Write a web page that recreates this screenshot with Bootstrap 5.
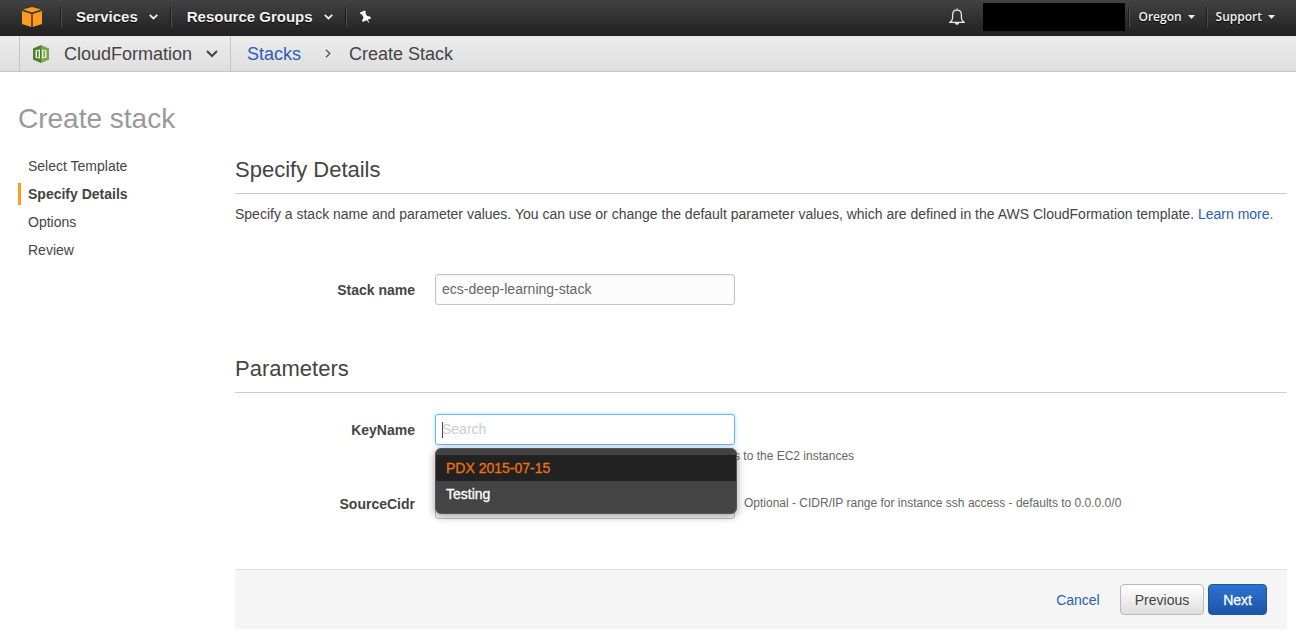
<!DOCTYPE html>
<html lang="en">
<head>
<meta charset="utf-8">
<meta name="viewport" content="width=device-width, initial-scale=1">
<title>Create Stack - CloudFormation</title>
<link href="https://cdn.jsdelivr.net/npm/bootstrap@5.3.0/dist/css/bootstrap.min.css" rel="stylesheet">
<style>
  body { font-family: "Liberation Sans", Arial, sans-serif; font-size: 14px; line-height: 20px; color: #444; background: #fff; }
  a { color: #2a5db8; text-decoration: none; }
  a:hover { text-decoration: underline; }

  .topbar { height: 36px; padding-bottom: 2px; background: linear-gradient(#424242, #202020); }
  .topbar button { color: #f2f2f2; background: none; border: 0; padding: 0; text-shadow: 0 1px 1px #000; }
  .topbar svg, .crumbs svg { display: block; flex: none; }
  .home-link { width: 60px; padding-left: 21px; }
  .rule { width: 2px; height: 20px; border-left: 1px solid #1c1c1c; background: #505050; flex: none; }
  .menu-btn { font-size: 15px; font-weight: 700; gap: 11px; height: 33px; }
  .services { margin: 0 12px 0 14px; }
  .groups { margin: 0 12px 0 15px; }
  .pin { margin-left: 11px; }
  .small-btn { font-family: "Open Sans", sans-serif; font-size: 12px; font-weight: 600; gap: 6px; }
  .region { margin: 0 11px 0 8px; }
  .support { margin: 0 21px 0 8px; }
  .account { width: 142px; height: 28px; background: #000; margin: 0 3px 0 18px; }

  .crumbs { height: 36px; border-bottom: 1px solid #c6c6c6; background: linear-gradient(#ececec, #dfdfdf); font-size: 18px; }
  .service-btn { margin-left: 19px; padding: 0 12px; width: 212px; height: 35px; border: solid #c6c6c6; border-width: 0 1px; background: none; color: #444; }
  .crumb-sep { margin: 0 18px 0 24px; }

  .wizard { padding: 0 9px 8px 18px; }
  .page-title { font-size: 28px; line-height: 32px; color: #999; margin: 31px 0 0; font-weight: 400; }
  .steps { width: 217px; padding-top: 20px; }
  .step { padding: 0 0 0 7px; border-left: 3px solid transparent; line-height: 22px; margin-bottom: 6px; }
  .step.current { border-color: #ff9a1e; font-weight: 700; }
  .section-title { font-size: 22px; line-height: 28px; font-weight: 400; margin: 0; padding-bottom: 9px; border-bottom: 1px solid #ccc; }
  .details { padding-top: 21px; }
  .intro { margin: 10px 0 50px; }

  .field-label { width: 180px; text-align: right; font-weight: 700; line-height: 32px; flex: none; margin-right: 20px; }
  .field-box { width: 300px; flex: none; }
  .field-box .form-control { height: 31px; font-size: 14px; line-height: 20px; padding: 3px 6px 5px; border: 1px solid #c4c4c4; border-radius: 3px; background: #fcfcfc; color: #666; box-shadow: inset 0 1px 2px #eee; }
  .field-box .form-control.searching { border-color: #6cb5ec; box-shadow: 0 0 5px #b5dcf8; background: linear-gradient(#444, #444) 6px center / 1px 16px no-repeat #fff; }
  .form-control::placeholder { color: #ccc; }
  .hint { font-size: 12px; line-height: 16px; color: #666; white-space: nowrap; }
  .key-field { margin-top: 21px; }
  .key-hint { margin-top: 3px; padding-left: 299px; }
  .cidr-field { margin-top: 24px; }
  .cidr-hint { margin: 7px 0 0 9px; }
  .params { margin-top: 49px; }

  .key-menu { position: absolute; top: 34px; left: 0; width: 302px; margin: 0; padding: 6px 0; list-style: none; background: #444; border: 1px solid #555; border-radius: 6px; box-shadow: 0 2px 8px rgba(0,0,0,.4); z-index: 5; }
  .key-menu button { display: block; width: 100%; height: 26px; padding: 0 10px; border: 0; text-align: left; background: none; color: #fff; -webkit-text-stroke: 0.3px; }
  .key-menu button.picked { background: #222; color: #ec7211; }

  .actions { margin-top: 49px; padding: 14px 20px; background: #f5f5f5; border-top: 1px solid #e0e0e0; }
  .actions .btn { height: 31px; padding: 0 14px; font-size: 14px; line-height: 20px; border-radius: 4px; }
  .btn-prev { color: #444; border: 1px solid #b9b9b9; background: linear-gradient(#fff, #dedede); }
  .btn-next { color: #fff; border: 1px solid #1f55a3; background: linear-gradient(#2a73d0, #1e55a6); -webkit-text-stroke: 0.3px; margin-left: 4px; }
</style>
</head>
<body>
<header class="topbar d-flex align-items-center">
  <a href="#" class="home-link" aria-label="Console home">
    <svg width="22" height="22" viewBox="0 0 22 22" fill="#ff9a1e">
      <path d="M11 1 20 3.500 11 6.500 2 3.500Z"/>
      <path d="M1 5 10.300 8V21L1 18Z"/><path d="M21 5 11.700 8V21L21 18Z"/>
    </svg>
  </a>
  <span class="rule"></span>
  <button type="button" class="menu-btn services d-flex align-items-center"><span>Services</span>
    <svg width="9" height="6" viewBox="0 0 9 6" fill="none" stroke="#eee" stroke-width="1.800"><path d="M.7.9 4.500 4.500 8.300.9"/></svg></button>
  <span class="rule"></span>
  <button type="button" class="menu-btn groups d-flex align-items-center"><span>Resource Groups</span>
    <svg width="9" height="6" viewBox="0 0 9 6" fill="none" stroke="#eee" stroke-width="1.800"><path d="M.7.9 4.500 4.500 8.300.9"/></svg></button>
  <span class="rule"></span>
  <button type="button" class="pin" aria-label="Edit shortcuts">
    <svg width="14" height="15" viewBox="0 0 14 15" fill="#fff"><path d="M2 2.600 6.800.4 7.900 1.700 7.300 2.900 9.200 6 12 6.400 13 8.500 9.900 9.500 11.500 13.600 8.600 10.300 4.500 12 4.200 9.900 5.600 7.800 4 4.600 2.500 4.300Z"/></svg></button>
  <button type="button" class="ms-auto" aria-label="Notifications">
    <svg width="16" height="18" viewBox="0 0 16 18" fill="none" stroke="#e6e6e6" stroke-width="1.300"><path d="M8 .6V2M3.600 10V7C3.600 3.600 5.300 2.200 8 2.200S12.400 3.600 12.400 7V10C12.400 12 13.300 13 15 14.300H1C2.700 13 3.600 12 3.600 10Z"/><path d="M5.700 14.800H10.300Q9.800 16.900 8 16.900T5.700 14.800Z" fill="#e6e6e6" stroke="none"/></svg></button>
  <span class="account"></span>
  <span class="rule"></span>
  <button type="button" class="small-btn region d-flex align-items-center"><span>Oregon</span>
    <svg width="7" height="4" viewBox="0 0 7 4" fill="#eee"><path d="M0 0H7L3.500 4Z"/></svg></button>
  <span class="rule"></span>
  <button type="button" class="small-btn support d-flex align-items-center"><span>Support</span>
    <svg width="7" height="4" viewBox="0 0 7 4" fill="#eee"><path d="M0 0H7L3.500 4Z"/></svg></button>
</header>

<nav class="crumbs d-flex align-items-center" aria-label="Breadcrumb">
  <button type="button" class="service-btn d-flex align-items-center">
    <svg width="18" height="18" viewBox="0 0 18 18">
      <path fill="#4f7d2c" d="M9 0 1 3.500V14.500L9 18Z"/><path fill="#76a543" d="M9 0 17 3.500V14.500L9 18Z"/>
      <path fill="#e6eedd" d="M3.500 5.200 8 4.500V13.500L3.500 12.800ZM10 4.500 14.500 5.200V12.800L10 13.500Z"/>
      <path fill="#4f7d2c" d="M5 6 6.600 5.700V12.300L5 12Z"/><path fill="#76a543" d="M11.400 5.700 13 6V12L11.400 12.300Z"/>
    </svg>
    <span class="ms-auto">CloudFormation</span>
    <svg class="ms-auto" width="12" height="8" viewBox="0 0 12 8" fill="none" stroke="#444" stroke-width="2"><path d="M1 1 6 6 11 1"/></svg>
  </button>
  <a href="#" class="ms-3">Stacks</a>
  <svg class="crumb-sep" width="6" height="9" viewBox="0 0 6 9" fill="none" stroke="#555" stroke-width="1.300"><path d="M1 .8 4.800 4.500 1 8.200"/></svg>
  <span>Create Stack</span>
</nav>

<main class="wizard">
  <h1 class="page-title">Create stack</h1>
  <div class="d-flex">
    <ol class="steps list-unstyled flex-shrink-0 mb-0">
      <li class="step">Select Template</li>
      <li class="step current" aria-current="step">Specify Details</li>
      <li class="step">Options</li>
      <li class="step">Review</li>
    </ol>
    <form class="details flex-grow-1">
      <h2 class="section-title">Specify Details</h2>
      <p class="intro">Specify a stack name and parameter values. You can use or change the default parameter values, which are defined in the AWS CloudFormation template. <a href="#">Learn more.</a></p>
      <div class="d-flex">
        <label class="field-label" for="stackName">Stack name</label>
        <div class="field-box"><input class="form-control" id="stackName" type="text" value="ecs-deep-learning-stack"></div>
      </div>

      <h2 class="section-title params">Parameters</h2>
      <div class="d-flex key-field">
        <label class="field-label" for="keyName">KeyName</label>
        <div class="field-box position-relative">
          <input class="form-control searching" id="keyName" type="text" placeholder="Search">
          <ul class="key-menu">
            <li><button type="button" class="picked">PDX 2015-07-15</button></li>
            <li><button type="button">Testing</button></li>
          </ul>
          <div class="hint key-hint">s to the EC2 instances</div>
        </div>
      </div>
      <div class="d-flex cidr-field">
        <label class="field-label" for="sourceCidr">SourceCidr</label>
        <div class="field-box"><input class="form-control" id="sourceCidr" type="text"></div>
        <span class="hint cidr-hint">Optional - CIDR/IP range for instance ssh access - defaults to 0.0.0.0/0</span>
      </div>

      <div class="actions d-flex align-items-center justify-content-end">
        <a href="#" class="me-3 pe-1">Cancel</a>
        <button type="button" class="btn btn-prev">Previous</button>
        <button type="submit" class="btn btn-next">Next</button>
      </div>
    </form>
  </div>
</main>
<script src="https://cdn.jsdelivr.net/npm/bootstrap@5.3.0/dist/js/bootstrap.bundle.min.js"></script>
</body>
</html>
